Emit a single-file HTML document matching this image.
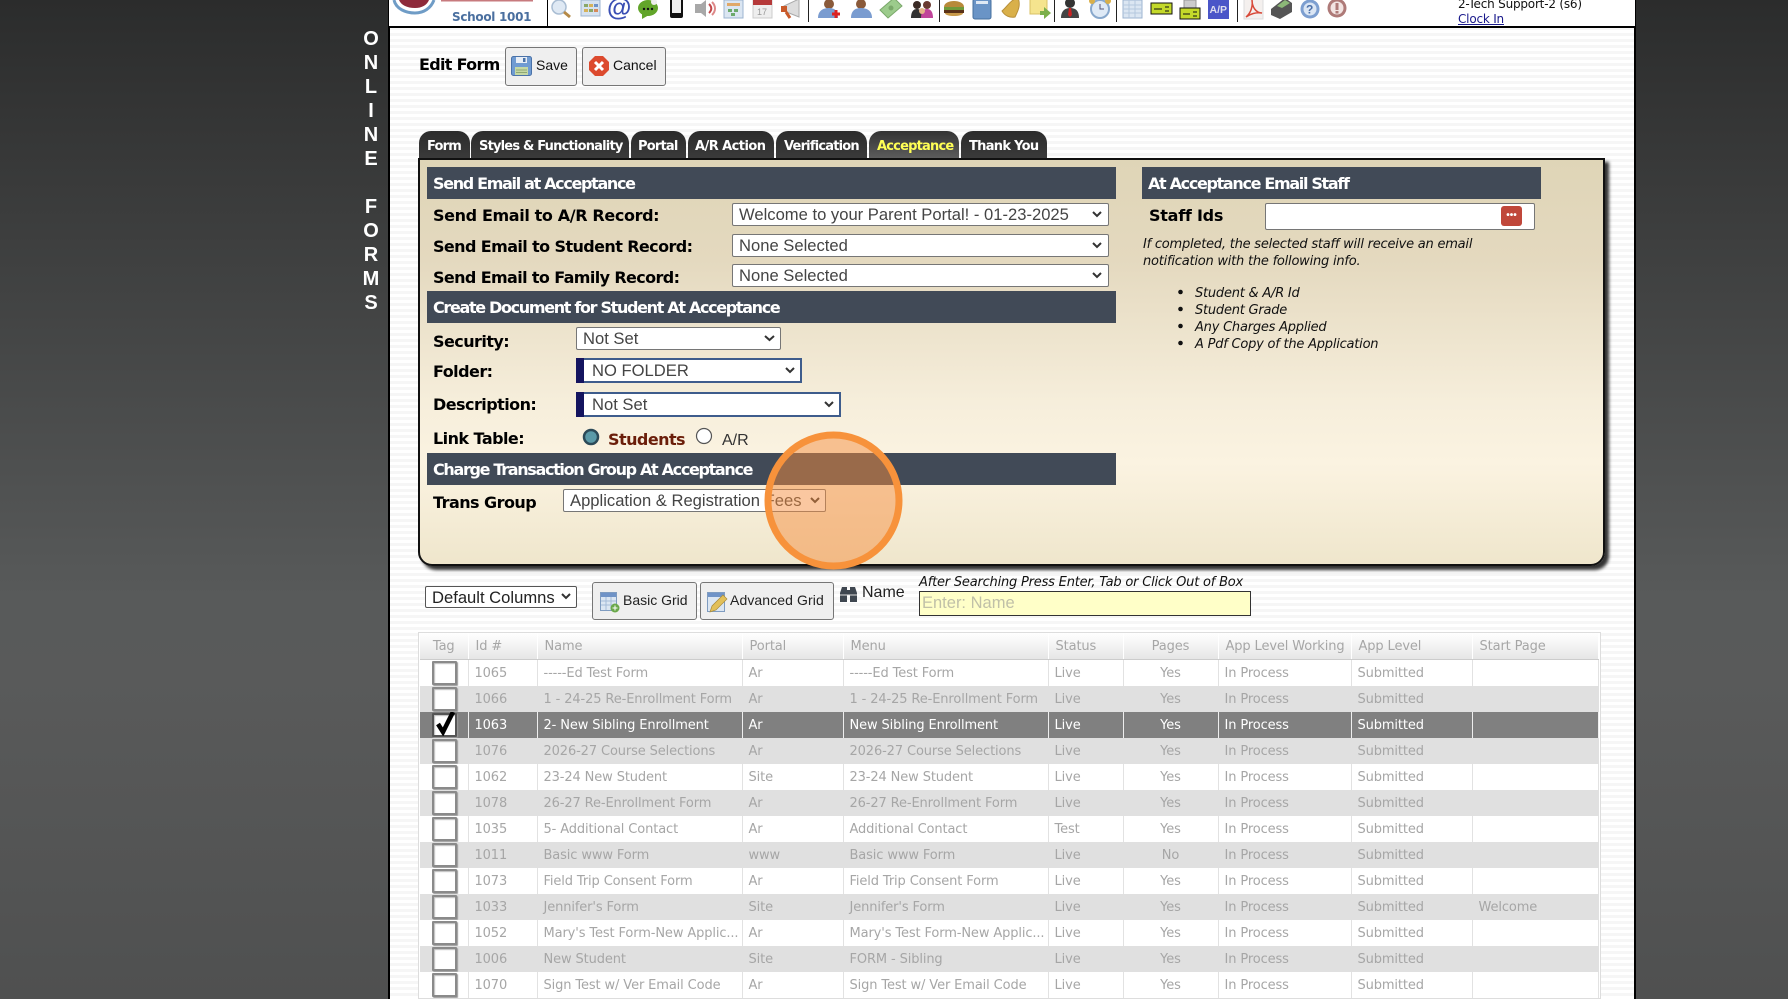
<!DOCTYPE html>
<html><head><meta charset="utf-8"><title>Edit Form</title>
<style>
html,body{margin:0;padding:0;width:1788px;height:999px;overflow:hidden;background:#444}
body{position:relative;font-family:"DejaVu Sans","Liberation Sans",sans-serif;background:linear-gradient(180deg,#2b2c2c 0,#333434 10%,#585a5a 60%,#595a5a 68%,#4f5050 100%)}
div,span,svg,table{box-sizing:border-box}
.a{position:absolute}
.t{position:absolute;line-height:20px;height:20px;white-space:nowrap}
#main{left:388px;top:0;width:1248px;height:999px;border-left:2px solid #000;border-right:2px solid #000;background:repeating-linear-gradient(180deg,#fff 0,#fff 3px,#f6f6f6 3px,#f6f6f6 6px)}
#hdr{left:389px;top:0;width:1246px;height:28px;background:#fff;border-bottom:2px solid #000}
.v{position:absolute;top:0;width:1px;height:22px;background:#222}
.side{position:absolute;left:356px;width:30px;text-align:center;color:#fff;font:bold 20px/20px "Liberation Sans",sans-serif}
.btn{position:absolute;background:#efefef;border:1px solid #767676;border-radius:3px}
.ar{font-family:"Liberation Sans",sans-serif}
.tab{position:absolute;top:131px;height:27px;background:linear-gradient(180deg,#2b2b2b,#3a3a3a);border-radius:12px 12px 0 0}
.tabt{position:absolute;top:137px;line-height:20px;font-size:13px;font-weight:bold;color:#fff;letter-spacing:-.8px;white-space:nowrap}
#panel{left:418px;top:158px;width:1187px;height:408px;border:2px solid #111;border-radius:0 0 14px 14px;background:linear-gradient(180deg,#dfd5b7 0,#e4d9bf 25%,#f6eedb 60%,#fbf3e1 75%,#efe6cc 100%);box-shadow:4px 4px 3px #333}
.bar{position:absolute;background:#414a57;height:32px;color:#fff;font-weight:bold;font-size:16px;line-height:34px;padding-left:6px;letter-spacing:-1.33px;white-space:nowrap}
.lb{position:absolute;font-weight:bold;font-size:16px;line-height:20px;height:20px;color:#000;letter-spacing:-.55px;white-space:nowrap}
.sel{position:absolute;background:#fff;border:1px solid #767676;border-radius:2px;font:16.6px/21px "Liberation Sans",sans-serif;color:#444;white-space:nowrap;overflow:hidden}
.sel span{position:absolute;left:6px;top:0}
.blue{border:2px solid #3e5c8c;border-radius:0}
.navy{position:absolute;background:#14145f;width:8px}
table{position:absolute;left:420px;top:633px;width:1178px;border-collapse:collapse;table-layout:fixed;font-size:13px;color:#a6a6a6}
th{height:26px;font-weight:normal;text-align:left;padding:0 0 0 7px;background:linear-gradient(180deg,#fff,#e6e6e6);border-right:1px solid #fff;border-bottom:1px solid #ccc;letter-spacing:-.12px;overflow:hidden;white-space:nowrap}
td{height:26px;padding:0 0 0 6px;border-right:1px solid #e2e2e2;white-space:nowrap;overflow:hidden;letter-spacing:-.12px;position:relative}
tr.o td{background:#fff}
tr.e td{background:#e0e0e0;border-right-color:#e0e0e0}
tr.s td{background:#808080;color:#fff;border-right-color:#eee}
td.c,th.c{text-align:center;padding-left:0}
.ck{position:absolute;left:12px;top:1px;width:25px;height:24px;background:#fff;border:2px solid #8a8a8a;box-shadow:inset 1px 1px 1px #bbb,1px 1px 1px #999;border-radius:1px}
tr.s .ck{background:#fff;border-color:#555}
.it{font-size:13px;font-style:italic;color:#111;letter-spacing:-.22px}
</style></head><body>
<div class="a" id="main"></div>
<div class="a" id="hdr"></div>

<div class="side" style="top:29px">O</div><div class="side" style="top:53px">N</div><div class="side" style="top:77px">L</div><div class="side" style="top:101px">I</div><div class="side" style="top:125px">N</div><div class="side" style="top:149px">E</div><div class="side" style="top:197px">F</div><div class="side" style="top:221px">O</div><div class="side" style="top:245px">R</div><div class="side" style="top:269px">M</div><div class="side" style="top:293px">S</div>

<svg class="a" style="left:389px;top:0" width="160" height="26" viewBox="389 0 160 26">
<path d="M394 0C396 9 406 13 415 13C424 13 431 8 434 0" fill="none" stroke="#6f9cc6" stroke-width="3"/>
<path d="M399 0C401 5 407 8 415 8C422 8 427 5 429 0Z" fill="#8e2a3a"/>
<rect x="441" y="0" width="92" height="1.500" fill="#c77a7e"/>
</svg>
<div class="t" style="left:452px;top:7px;font-size:12px;font-weight:bold;color:#4a6f9f;letter-spacing:-.3px">School 1001</div>
<div class="v" style="left:547px;height:26px;background:#000"></div>

<svg class="a" style="left:0;top:0" width="1400" height="26" viewBox="0 0 1400 26">
<!-- magnifier -->
<circle cx="559" cy="7" r="7" fill="#dfe9f4" stroke="#a9bdd3" stroke-width="1.500"/><path d="M564 12L570 17" stroke="#b58a48" stroke-width="3"/>
<!-- grid -->
<rect x="581" y="0" width="19" height="16" fill="#d6e2f0" stroke="#9cb4d0"/><rect x="584" y="4" width="4" height="3" fill="#8aa86a"/><rect x="589" y="4" width="4" height="3" fill="#d6b25a"/><rect x="594" y="4" width="4" height="3" fill="#6f93c7"/><rect x="584" y="9" width="4" height="3" fill="#d6b25a"/><rect x="589" y="9" width="4" height="3" fill="#8aa86a"/><rect x="594" y="9" width="4" height="3" fill="#d68a5a"/>
<!-- at -->
<text x="607" y="16" font-family="Liberation Sans,sans-serif" font-size="25" font-weight="bold" fill="#3a4fb4">@</text>
<!-- chat -->
<ellipse cx="648" cy="8" rx="10" ry="8" fill="#62a52a"/><path d="M642 13L642 19L649 15Z" fill="#62a52a"/><circle cx="644" cy="9" r="1.200" fill="#111"/><circle cx="648" cy="9" r="1.200" fill="#111"/><circle cx="652" cy="9" r="1.200" fill="#111"/><circle cx="654" cy="2" r="3" fill="#eee"/>
<!-- phone -->
<rect x="670" y="-2" width="13" height="20" rx="2" fill="#111"/><rect x="672" y="0" width="9" height="13" fill="#eee"/>
<!-- speaker -->
<path d="M695 4H701L706 0V17L701 13H695Z" fill="#a8a8a8"/><path d="M709 4C712 7 712 10 709 13" fill="none" stroke="#c2484a" stroke-width="2"/><path d="M712 2C716 6 716 11 712 15" fill="none" stroke="#d88" stroke-width="2"/>
<!-- green grid -->
<rect x="724" y="0" width="19" height="18" fill="#dbe6f2" stroke="#9cb4d0"/><rect x="727" y="3" width="13" height="3" fill="#e0a868"/><path d="M728 9h4v3h-4zM734 9h4v3h-4zM731 13h4v3h-4z" fill="#6caa6c"/>
<!-- calendar -->
<rect x="753" y="-1" width="19" height="19" fill="#eee" stroke="#ccc"/><rect x="753" y="-1" width="19" height="6" fill="#b5393a"/><text x="757" y="15" font-size="9" font-family="Liberation Sans,sans-serif" fill="#999">17</text>
<!-- megaphone -->
<path d="M784 6L799 -1V17L784 11Z" fill="#ddd" stroke="#aaa"/><rect x="781" y="6" width="6" height="6" fill="#c95a2a"/><path d="M786 12L790 18" stroke="#c95a2a" stroke-width="3"/>
<!-- user + -->
<circle cx="829" cy="4" r="5" fill="#8a5a3a"/><path d="M818 18C818 10 824 8 829 8C834 8 838 10 838 18Z" fill="#7a9cd0"/><path d="M836 10v8M832 14h8" stroke="#d22" stroke-width="3"/>
<!-- user -->
<circle cx="861" cy="4" r="5" fill="#8a5a3a"/><path d="M851 18C851 10 856 8 861 8C866 8 872 10 872 18Z" fill="#7a9cd0"/>
<!-- money -->
<path d="M880 10L894 -2L902 6L888 18Z" fill="#9ccb8c" stroke="#7aa86a"/><circle cx="891" cy="8" r="2.500" fill="#7aa86a"/>
<!-- family -->
<circle cx="917" cy="5" r="4" fill="#3a2a25"/><circle cx="927" cy="5" r="4" fill="#6a3a30"/><path d="M911 18C911 11 914 9 917 9C920 9 923 11 923 18Z" fill="#333"/><path d="M921 18C921 11 924 9 927 9C930 9 933 11 933 18Z" fill="#c0459a"/><circle cx="922" cy="11" r="3" fill="#e5b48a"/>
<!-- burger -->
<path d="M944 7C944 -1 964 -1 964 7Z" fill="#b88a3a"/><rect x="944" y="7" width="20" height="3" fill="#6f9a3a"/><rect x="944" y="10" width="20" height="3" fill="#5a3218"/><path d="M945 13H963C963 17 945 17 945 13Z" fill="#c89a4a"/>
<!-- book -->
<rect x="973" y="-1" width="18" height="20" rx="2" fill="#6a94c6" stroke="#47709f"/><rect x="976" y="1" width="12" height="3" fill="#dfe9f4"/>
<!-- bell -->
<path d="M1018 -2C1010 0 1008 6 1002 11C1005 16 1010 18 1015 17C1018 11 1021 5 1018 -2Z" fill="#d9b04a" stroke="#b8903a"/>
<!-- note -->
<rect x="1030" y="-1" width="17" height="15" fill="#f5e48e" stroke="#d8c066"/><path d="M1040 11H1044V7L1051 13L1044 19V15H1040Z" fill="#7cb04a"/>
<!-- manager -->
<circle cx="1070" cy="3" r="5" fill="#333"/><path d="M1061 18C1061 10 1066 8 1070 8C1075 8 1079 10 1079 18Z" fill="#444"/><path d="M1069 8H1071L1072 15L1070 17L1068 15Z" fill="#c22"/>
<!-- clock -->
<circle cx="1100" cy="9" r="9" fill="#dfeaf6" stroke="#88a8cc" stroke-width="2"/><path d="M1100 4V9H1104" stroke="#557" fill="none"/><circle cx="1092" cy="1" r="3" fill="#d9b04a"/><circle cx="1108" cy="1" r="3" fill="#d9b04a"/>
<!-- table -->
<rect x="1123" y="0" width="19" height="18" fill="#dbe6f2" stroke="#9cb4d0"/><path d="M1123 5H1142M1123 9H1142M1123 13H1142M1129 0V18M1135 0V18" stroke="#b5c8de"/>
<!-- card -->
<rect x="1151" y="3" width="21" height="11" fill="#c4d92a" stroke="#111"/><path d="M1154 9H1162M1165 7H1169M1165 11H1169" stroke="#111"/>
<!-- printer card -->
<rect x="1184" y="0" width="12" height="8" fill="#ccc" stroke="#999"/><rect x="1180" y="8" width="20" height="11" fill="#c4d92a" stroke="#111"/><path d="M1183 14H1190M1193 12H1197M1193 16H1197" stroke="#111"/>
<!-- AP -->
<rect x="1208" y="-1" width="21" height="20" fill="#4a55c8"/><text x="1209.500" y="13" font-family="Liberation Sans,sans-serif" font-size="10.500" font-weight="bold" fill="#dde">A/P</text>
<!-- pdf -->
<rect x="1244" y="-1" width="19" height="20" fill="#f4f0ee" stroke="#ddd"/><path d="M1246 17C1251 13 1253 6 1252 0C1252 7 1256 13 1262 13C1256 12 1250 14 1246 17Z" fill="none" stroke="#d84a3a" stroke-width="1.500"/>
<!-- cash -->
<path d="M1271 9L1285 -2L1292 3V12L1280 19L1271 15Z" fill="#555"/><path d="M1277 6L1285 0L1290 3L1282 8Z" fill="#8cb878"/>
<!-- help -->
<circle cx="1310" cy="9" r="9.500" fill="#7d9fd0"/><circle cx="1310" cy="9" r="6.500" fill="#dbe6f4"/><text x="1306" y="13.500" font-family="Liberation Sans,sans-serif" font-size="12" font-weight="bold" fill="#4a6fa8">?</text>
<!-- stop -->
<circle cx="1337" cy="8" r="9.500" fill="#ae7a78"/><circle cx="1337" cy="8" r="6.500" fill="#f2e4e2"/><rect x="1335.500" y="3" width="3" height="7" fill="#ae7a78"/><rect x="1335.500" y="11" width="3" height="2.500" fill="#ae7a78"/>
</svg>
<div class="v" style="left:808px"></div><div class="v" style="left:939px"></div><div class="v" style="left:1054px"></div><div class="v" style="left:1116px"></div><div class="v" style="left:1237px"></div>

<div class="t" style="left:1458px;top:-6px;font-size:12px;color:#111;letter-spacing:-.2px">2-Tech Support-2 (s6)</div>
<div class="t" style="left:1458px;top:9px;font-size:12px;color:#1a1a8c;text-decoration:underline;letter-spacing:-.2px">Clock In</div>

<div class="t" style="left:419px;top:55px;font-size:16px;font-weight:bold;color:#000;letter-spacing:-.7px">Edit Form</div>
<div class="btn" style="left:505px;top:47px;width:72px;height:39px"></div>
<svg class="a" style="left:511px;top:56px" width="21" height="20" viewBox="0 0 21 20"><rect x=".5" y=".5" width="20" height="19" rx="2" fill="#6f9bd2" stroke="#4a72a8"/><rect x="5" y="1" width="11" height="6" fill="#e8eef6"/><rect x="12" y="2" width="2.500" height="4" fill="#4a72a8"/><rect x="4" y="11" width="13" height="8" fill="#c4d8a4"/><path d="M5 14H16M5 16.500H16" stroke="#8fa874"/></svg>
<div class="t ar" style="left:536px;top:55px;font-size:14px;color:#111">Save</div>
<div class="btn" style="left:582px;top:47px;width:84px;height:39px"></div>
<svg class="a" style="left:589px;top:56px" width="20" height="20" viewBox="0 0 20 20"><path d="M6 0H14L20 6V14L14 20H6L0 14V6Z" fill="#dc4a2e"/><path d="M6 6L14 14M14 6L6 14" stroke="#fff" stroke-width="3"/></svg>
<div class="t ar" style="left:613px;top:55px;font-size:14px;color:#111">Cancel</div>

<div class="tab" style="left:419px;width:51px"></div>
<div class="tab" style="left:471px;width:158px"></div>
<div class="tab" style="left:631px;width:55px"></div>
<div class="tab" style="left:688px;width:86px"></div>
<div class="tab" style="left:776px;width:91px"></div>
<div class="tab" style="left:869px;width:90px;background:linear-gradient(180deg,#333,#5c5c5c)"></div>
<div class="tab" style="left:961px;width:86px"></div>
<div class="tabt" style="left:427px">Form</div>
<div class="tabt" style="left:479px">Styles &amp; Functionality</div>
<div class="tabt" style="left:638px">Portal</div>
<div class="tabt" style="left:695px;letter-spacing:-.55px">A/R Action</div>
<div class="tabt" style="left:784px">Verification</div>
<div class="tabt" style="left:877px;color:#ffff55">Acceptance</div>
<div class="tabt" style="left:969px;letter-spacing:-.7px">Thank You</div>

<div class="a" id="panel"></div>
<div class="bar" style="left:427px;top:167px;width:689px">Send Email at Acceptance</div>
<div class="bar" style="left:427px;top:291px;width:689px">Create Document for Student At Acceptance</div>
<div class="bar" style="left:427px;top:453px;width:689px">Charge Transaction Group At Acceptance</div>
<div class="bar" style="left:1142px;top:167px;width:399px">At Acceptance Email Staff</div>

<div class="lb" style="left:433px;top:206px;letter-spacing:-.37px">Send Email to A/R Record:</div>
<div class="lb" style="left:433px;top:237px;letter-spacing:-.6px">Send Email to Student Record:</div>
<div class="lb" style="left:433px;top:268px;letter-spacing:-.62px">Send Email to Family Record:</div>
<div class="lb" style="left:433px;top:332px">Security:</div>
<div class="lb" style="left:433px;top:362px">Folder:</div>
<div class="lb" style="left:433px;top:395px">Description:</div>
<div class="lb" style="left:433px;top:429px">Link Table:</div>
<div class="lb" style="left:433px;top:493px">Trans Group</div>

<div class="sel" style="left:732px;top:203px;width:377px;height:23px"><span>Welcome to your Parent Portal! - 01-23-2025</span></div>
<div class="sel" style="left:732px;top:234px;width:377px;height:23px"><span>None Selected</span></div>
<div class="sel" style="left:732px;top:264px;width:377px;height:23px"><span>None Selected</span></div>
<div class="sel" style="left:576px;top:327px;width:205px;height:23px"><span>Not Set</span></div>
<div class="sel blue" style="left:576px;top:358px;width:226px;height:25px"><span style="left:14px">NO FOLDER</span></div>
<div class="navy" style="left:576px;top:358px;height:25px"></div>
<div class="sel blue" style="left:576px;top:392px;width:265px;height:25px"><span style="left:14px">Not Set</span></div>
<div class="navy" style="left:576px;top:392px;height:25px"></div>
<div class="sel" style="left:563px;top:489px;width:263px;height:23px"><span>Application &amp; Registration Fees</span></div>
<div class="sel" style="left:425px;top:586px;width:152px;height:22px;border-color:#555;color:#222"><span>Default Columns</span></div>

<svg class="a" style="left:0;top:0" width="1788" height="620" viewBox="0 0 1788 620" fill="none" stroke="#333" stroke-width="2">
<path d="M1093 212L1097 216L1101 212M1093 243L1097 247L1101 243M1093 273L1097 277L1101 273M765 336L769.500 340L774 336M786 368L790 372L794 368M825 402L829 406L833 402M811 498L815 502L819 498M562 594L566 598L570 594"/>
</svg>

<svg class="a" style="left:580px;top:426px" width="150" height="22" viewBox="0 0 150 22"><circle cx="11" cy="11" r="7" fill="#5b9aa8" stroke="#2c4a58" stroke-width="2.500"/><circle cx="124" cy="10" r="7.500" fill="#fff" stroke="#555" stroke-width="1.200"/></svg>
<div class="lb" style="left:608px;top:430px;color:#6b1e0a">Students</div>
<div class="t ar" style="left:722px;top:431px;font-size:16px;color:#333">A/R</div>

<div class="lb" style="left:1149px;top:206px;letter-spacing:-.25px">Staff Ids</div>
<div class="a" style="left:1265px;top:203px;width:270px;height:27px;background:#fff;border:1px solid #767676;border-radius:2px"></div>
<div class="a" style="left:1501px;top:206px;width:21px;height:20px;background:#c0473a;border-radius:3px;color:#fff;font:bold 10px/19px 'Liberation Sans',sans-serif;text-align:center">•••</div>
<div class="t it" style="left:1143px;top:233px;margin-top:1.500px">If completed, the selected staff will receive an email</div>
<div class="t it" style="left:1143px;top:250px;margin-top:1.500px">notification with the following info.</div>
<div class="t it" style="left:1195px;top:284px">Student &amp; A/R Id</div>
<div class="t it" style="left:1195px;top:301px">Student Grade</div>
<div class="t it" style="left:1195px;top:318px">Any Charges Applied</div>
<div class="t it" style="left:1195px;top:335px">A Pdf Copy of the Application</div>
<svg class="a" style="left:1176px;top:285px" width="10" height="66" viewBox="0 0 10 66"><circle cx="4.500" cy="7" r="2.300" fill="#111"/><circle cx="4.500" cy="24" r="2.300" fill="#111"/><circle cx="4.500" cy="41" r="2.300" fill="#111"/><circle cx="4.500" cy="58" r="2.300" fill="#111"/></svg>

<div class="btn" style="left:592px;top:582px;width:105px;height:38px"></div>
<svg class="a" style="left:600px;top:592px" width="20" height="21" viewBox="0 0 20 21"><rect x=".5" y=".5" width="16" height="18" fill="#dbe6f2" stroke="#7f9cc0"/><rect x="1" y="1" width="15" height="4" fill="#6f93c7"/><path d="M1 9H16M1 13H16M6 5V18M11 5V18" stroke="#a5bcd8"/><circle cx="15" cy="16" r="4.500" fill="#6aa84a"/><path d="M15 13.500V18.500M12.500 16H17.500" stroke="#fff"/></svg>
<div class="t ar" style="left:623px;top:590px;font-size:14px;color:#222">Basic Grid</div>
<div class="btn" style="left:700px;top:582px;width:134px;height:38px"></div>
<svg class="a" style="left:707px;top:592px" width="21" height="21" viewBox="0 0 21 21"><rect x=".5" y=".5" width="17" height="19" fill="#dbe6f2" stroke="#7f9cc0"/><rect x="1" y="1" width="16" height="4" fill="#6f93c7"/><path d="M3 20L5 14L16 3L20 7L9 18Z" fill="#e2c05a" stroke="#a88a3a" stroke-width=".7"/></svg>
<div class="t ar" style="left:730px;top:590px;font-size:14px;color:#222;letter-spacing:.1px">Advanced Grid</div>
<svg class="a" style="left:839px;top:585px" width="19" height="18" viewBox="0 0 19 18"><path d="M1 17V8L3 2H8V17ZM11 17V2H16L18 8V17Z" fill="#3f4750"/><rect x="8" y="5" width="3" height="5" fill="#3f4750"/><path d="M1 10H18" stroke="#ddd"/></svg>
<div class="t ar" style="left:862px;top:583px;font-size:16px;color:#222">Name</div>
<div class="t" style="left:919px;top:573px;font-size:13px;font-style:italic;color:#111;letter-spacing:-.2px">After Searching Press Enter, Tab or Click Out of Box</div>
<div class="a" style="left:919px;top:591px;width:332px;height:25px;background:#ffffc8;border:1px solid #333"></div>
<div class="t ar" style="left:922px;top:593px;font-size:16.500px;color:#c0c0a8">Enter: Name</div>

<div class="a" style="left:418px;top:632px;height:367px;width:1183px;background:#fff;border:1px solid #ddd"></div>
<table>
<colgroup><col style="width:48px"><col style="width:69px"><col style="width:205px"><col style="width:101px"><col style="width:205px"><col style="width:75px"><col style="width:95px"><col style="width:133px"><col style="width:121px"><col style="width:126px"></colgroup>
<tr><th class="c">Tag</th><th>Id #</th><th>Name</th><th>Portal</th><th>Menu</th><th>Status</th><th class="c">Pages</th><th>App Level Working</th><th>App Level</th><th>Start Page</th></tr>
<tr class="o"><td><div class="ck"></div></td><td>1065</td><td>-----Ed Test Form</td><td>Ar</td><td>-----Ed Test Form</td><td>Live</td><td class="c">Yes</td><td>In Process</td><td>Submitted</td><td></td></tr>
<tr class="e"><td><div class="ck"></div></td><td>1066</td><td>1 - 24-25 Re-Enrollment Form</td><td>Ar</td><td>1 - 24-25 Re-Enrollment Form</td><td>Live</td><td class="c">Yes</td><td>In Process</td><td>Submitted</td><td></td></tr>
<tr class="s"><td><div class="ck"><svg style="position:absolute;left:1px;top:-4px" width="21" height="25" viewBox="0 0 21 25"><path d="M3 13L8 21L18 1" fill="none" stroke="#000" stroke-width="4.500"/></svg></div></td><td>1063</td><td>2- New Sibling Enrollment</td><td>Ar</td><td>New Sibling Enrollment</td><td>Live</td><td class="c">Yes</td><td>In Process</td><td>Submitted</td><td></td></tr>
<tr class="e"><td><div class="ck"></div></td><td>1076</td><td>2026-27 Course Selections</td><td>Ar</td><td>2026-27 Course Selections</td><td>Live</td><td class="c">Yes</td><td>In Process</td><td>Submitted</td><td></td></tr>
<tr class="o"><td><div class="ck"></div></td><td>1062</td><td>23-24 New Student</td><td>Site</td><td>23-24 New Student</td><td>Live</td><td class="c">Yes</td><td>In Process</td><td>Submitted</td><td></td></tr>
<tr class="e"><td><div class="ck"></div></td><td>1078</td><td>26-27 Re-Enrollment Form</td><td>Ar</td><td>26-27 Re-Enrollment Form</td><td>Live</td><td class="c">Yes</td><td>In Process</td><td>Submitted</td><td></td></tr>
<tr class="o"><td><div class="ck"></div></td><td>1035</td><td>5- Additional Contact</td><td>Ar</td><td>Additional Contact</td><td>Test</td><td class="c">Yes</td><td>In Process</td><td>Submitted</td><td></td></tr>
<tr class="e"><td><div class="ck"></div></td><td>1011</td><td>Basic www Form</td><td>www</td><td>Basic www Form</td><td>Live</td><td class="c">No</td><td>In Process</td><td>Submitted</td><td></td></tr>
<tr class="o"><td><div class="ck"></div></td><td>1073</td><td>Field Trip Consent Form</td><td>Ar</td><td>Field Trip Consent Form</td><td>Live</td><td class="c">Yes</td><td>In Process</td><td>Submitted</td><td></td></tr>
<tr class="e"><td><div class="ck"></div></td><td>1033</td><td>Jennifer's Form</td><td>Site</td><td>Jennifer's Form</td><td>Live</td><td class="c">Yes</td><td>In Process</td><td>Submitted</td><td>Welcome</td></tr>
<tr class="o"><td><div class="ck"></div></td><td>1052</td><td>Mary's Test Form-New Applic...</td><td>Ar</td><td>Mary's Test Form-New Applic...</td><td>Live</td><td class="c">Yes</td><td>In Process</td><td>Submitted</td><td></td></tr>
<tr class="e"><td><div class="ck"></div></td><td>1006</td><td>New Student</td><td>Site</td><td>FORM - Sibling</td><td>Live</td><td class="c">Yes</td><td>In Process</td><td>Submitted</td><td></td></tr>
<tr class="o"><td><div class="ck"></div></td><td>1070</td><td>Sign Test w/ Ver Email Code</td><td>Ar</td><td>Sign Test w/ Ver Email Code</td><td>Live</td><td class="c">Yes</td><td>In Process</td><td>Submitted</td><td></td></tr>
</table>

<svg class="a" style="left:0;top:0;pointer-events:none" width="1788" height="999" viewBox="0 0 1788 999"><circle cx="833.500" cy="500.500" r="65.500" fill="rgb(245,141,61)" fill-opacity=".49" stroke="#f7923b" stroke-width="7"/></svg>
</body></html>
